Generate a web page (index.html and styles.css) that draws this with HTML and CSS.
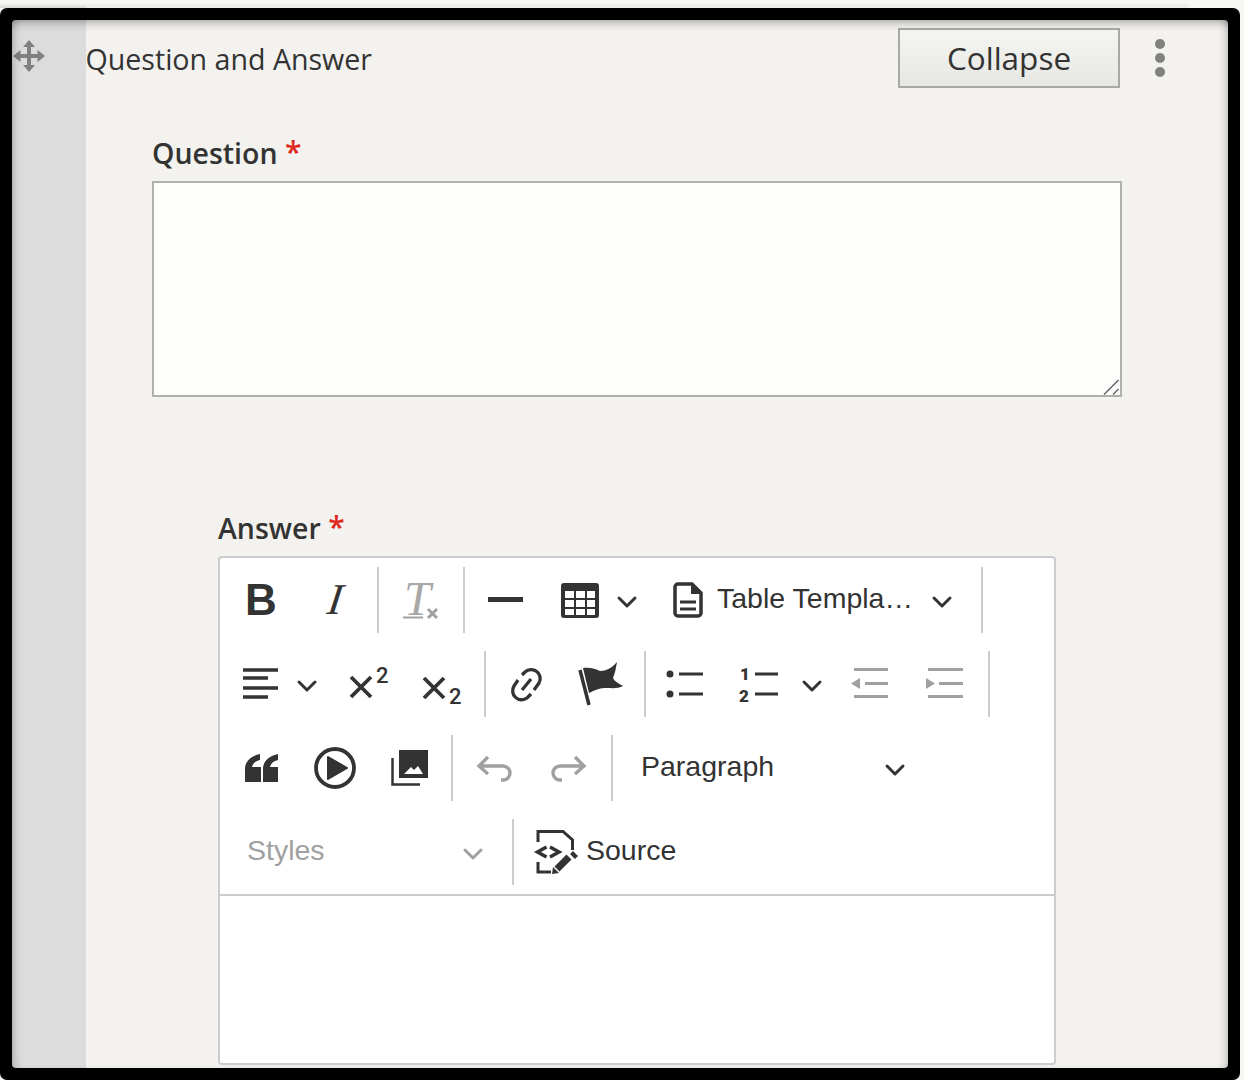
FILE: index.html
```html
<!DOCTYPE html>
<html lang="en">
<head>
<meta charset="utf-8">
<title>Question and Answer</title>
<link rel="stylesheet" href="styles.css">
</head>
<body>
<div class="strip"></div>
<div class="frame">
  <aside class="rail">
    <svg class="move" width="32" height="32" viewBox="0 0 32 32"><path d="M16 0l6 7h-4v7h6.500v-4L32 16l-7.500 6v-4H18v7h4l-6 7-6-7h4v-7H7.500v4L0 16l7.500-6v4H14V7h-4z"/></svg>
  </aside>
  <main class="main">
    <header class="head">
      <h2 class="title">Question and Answer</h2>
      <button class="collapse" type="button">Collapse</button>
      <div class="kebab"><span></span><span></span><span></span></div>
    </header>

    <section class="question">
      <label class="label">Question <span class="req">*</span></label>
      <div class="qwrap">
        <textarea class="qbox"></textarea>
        <svg class="grip" width="16" height="16" viewBox="0 0 16 16"><path d="M1 15.500L15.500 1M10 15.500L15.500 10"/></svg>
      </div>
    </section>

    <section class="answer">
      <label class="label">Answer <span class="req">*</span></label>
      <div class="editor">
        <div class="toolbar">
          <div class="row">
            <div class="tb"><span class="g-b">B</span></div>
            <div class="tb"><span class="g-i">I</span></div>
            <i class="sep"></i>
            <div class="tb">
              <svg class="ic off" width="40" height="40" viewBox="0 0 40 40"><text x="3" y="35" class="t-tx">T</text><path class="ln" d="M2 37.500h20" stroke-width="2"/><path class="ln" d="M27 29l9 9m0-9l-9 9" stroke-width="3"/></svg>
            </div>
            <i class="sep"></i>
            <div class="tb">
              <svg class="ic" width="40" height="40" viewBox="0 0 40 40"><path class="ln" d="M1 19.500h35" stroke-width="5"/></svg>
            </div>
            <div class="drop d107">
              <svg class="ic" width="40" height="40" viewBox="0 0 40 40"><path class="fill" fill-rule="evenodd" d="M3 3h32a3 3 0 0 1 3 3v29a3 3 0 0 1-3 3H3a3 3 0 0 1-3-3V6a3 3 0 0 1 3-3zM4 11v7h9v-7zM15 11v7h9v-7zM26 11v7h8v-7zM4 20v7h9v-7zM15 20v7h9v-7zM26 20v7h8v-7zM4 29v6h9v-6zM15 29v6h9v-6zM26 29v6h8v-6z"/></svg>
              <svg class="chev" width="20" height="12" viewBox="0 0 20 12"><path d="M2 2l8 8 8-8"/></svg>
            </div>
            <div class="drop tpl">
              <svg class="ic-doc" width="30" height="36" viewBox="0 0 30 36"><path class="ln" d="M5 2h14l9 9v20a3 3 0 0 1-3 3H5a3 3 0 0 1-3-3V5a3 3 0 0 1 3-3z" stroke-width="3.500"/><path class="fill" d="M18 1l11 11H18z"/><path class="ln" d="M7 20h16M7 27h16" stroke-width="3"/></svg>
              <span class="tx tpl-tx">Table Templa…</span>
              <svg class="chev end" width="20" height="12" viewBox="0 0 20 12"><path d="M2 2l8 8 8-8"/></svg>
            </div>
            <i class="sep"></i>
          </div>

          <div class="row">
            <div class="drop d107">
              <svg class="ic" width="40" height="40" viewBox="0 0 40 40"><path class="ln" d="M2 6h35M2 14h25M2 24h35M2 33h25" stroke-width="3.600"/></svg>
              <svg class="chev" width="20" height="12" viewBox="0 0 20 12"><path d="M2 2l8 8 8-8"/></svg>
            </div>
            <div class="tb">
              <svg class="ic" width="40" height="40" viewBox="0 0 40 40"><path class="ln" d="M3 13l20 20m0-20L3 33" stroke-width="3.800"/><text x="28" y="19" class="t-num">2</text></svg>
            </div>
            <div class="tb">
              <svg class="ic" width="40" height="40" viewBox="0 0 40 40"><path class="ln" d="M2 14l20 20m0-20L2 34" stroke-width="3.800"/><text x="27" y="40" class="t-num">2</text></svg>
            </div>
            <i class="sep"></i>
            <div class="tb">
              <svg class="ic" width="40" height="40" viewBox="0 0 40 40"><path class="ln" d="M14 11l3-3a9 9 0 0 1 14 11l-5 7M10 16l-4 6a9 9 0 0 0 13 12l4-4M14 26l9-11" stroke-width="3.300"/></svg>
            </div>
            <div class="tb">
              <svg class="ic" width="40" height="40" viewBox="0 0 40 40"><path class="ln" d="M-2 6l9 35" stroke-width="3.500"/><path class="fill" d="M1 4C8 3 14 5 18 7 24 7 30 4 35-2 34 4 33 9 31 14 33 18 38 20 41 22 36 25 30 24 24 24 19 24 15 25 7 29z"/></svg>
            </div>
            <i class="sep"></i>
            <div class="tb">
              <svg class="ic" width="40" height="40" viewBox="0 0 40 40"><circle class="fill" cx="2" cy="10" r="3.500"/><circle class="fill" cx="2" cy="30" r="3.500"/><path class="ln" d="M11 10h24M11 30h24" stroke-width="3"/></svg>
            </div>
            <div class="drop d110">
              <svg class="ic" width="40" height="40" viewBox="0 0 40 40"><text x="-2" y="16" class="t-ol">1</text><text x="-3" y="38" class="t-ol">2</text><path class="ln" d="M13 10h23M13 30h23" stroke-width="3"/></svg>
              <svg class="chev wide" width="20" height="12" viewBox="0 0 20 12"><path d="M2 2l8 8 8-8"/></svg>
            </div>
            <div class="tb">
              <svg class="ic off" width="40" height="40" viewBox="0 0 40 40"><path class="ln" d="M2 5.500h34M13 19.500h23M2 32.500h34" stroke-width="3"/><path class="fill" d="M-1 19.500L8 14v11z"/></svg>
            </div>
            <div class="tb">
              <svg class="ic off" width="40" height="40" viewBox="0 0 40 40"><path class="ln" d="M2 5.500h35M13 19.500h24M2 32.500h35" stroke-width="3"/><path class="fill" d="M9 19.500L0 14v11z"/></svg>
            </div>
            <i class="sep"></i>
          </div>

          <div class="row">
            <div class="tb">
              <svg class="ic" width="40" height="40" viewBox="0 0 40 40"><path class="fill" d="M4 34V21C4 13 10 8 19 6v6c-4 1-7 3-8 7h9v15zM22 34V21c0-8 6-13 15-15v6c-4 1-7 3-8 7h8v15z"/></svg>
            </div>
            <div class="tb">
              <svg class="ic" width="42" height="42" viewBox="0 0 42 42"><circle class="ln" cx="21" cy="21" r="19" stroke-width="3.800"/><path class="fill" stroke="#333" stroke-width="2" stroke-linejoin="round" d="M14 10l19 11-19 11z"/></svg>
            </div>
            <div class="tb">
              <svg class="ic" width="40" height="40" viewBox="0 0 40 40"><path class="fill" fill-rule="evenodd" d="M10 2h29v28H10zM15 26h19l-5-8-4 4-3-3z"/><path class="ln" d="M3.500 10v26.500H31" stroke-width="2.500"/></svg>
            </div>
            <i class="sep"></i>
            <div class="tb">
              <svg class="ic off" width="40" height="40" viewBox="0 0 40 40"><path class="ln" d="M13 9l-9 9 9 8M4 18h24a7 7 0 0 1 0 14h-2" stroke-width="3.400"/></svg>
            </div>
            <div class="tb">
              <svg class="ic off" width="40" height="40" viewBox="0 0 40 40"><path class="ln" d="M26 9l9 9-9 8M35 18H11a7 7 0 0 0 0 14h2" stroke-width="3.400"/></svg>
            </div>
            <i class="sep"></i>
            <div class="drop para">
              <span class="tx">Paragraph</span>
              <svg class="chev end" width="20" height="12" viewBox="0 0 20 12"><path d="M2 2l8 8 8-8"/></svg>
            </div>
          </div>

          <div class="row">
            <div class="drop styles off">
              <span class="tx">Styles</span>
              <svg class="chev end" width="20" height="12" viewBox="0 0 20 12"><path d="M2 2l8 8 8-8"/></svg>
            </div>
            <i class="sep"></i>
            <div class="source">
              <svg class="ic-src" width="44" height="44" viewBox="0 0 44 44"><path class="ln" d="M3 12V1.500h25L37.500 10v10M3 32v10h13" stroke-width="3"/><path class="ln" d="M11.500 17l-9 5 9 5M15 17l9 5-9 5" stroke-width="3.500"/><path class="ln" d="M22 39l12-12" stroke-width="7" stroke-linecap="butt"/><path class="fill" d="M17 44l1-7 6 6zM38 21l5 5-3 3-5-5z"/></svg>
              <span class="tx">Source</span>
            </div>
          </div>
        </div>
        <div class="content"></div>
      </div>
    </section>
  </main>
  <div class="shade"></div>
</div>
</body>
</html>
```

FILE: styles.css
```css
* { box-sizing: border-box; }
html, body { margin: 0; height: 1080px; overflow: hidden; }
body { background: #f6f6f3; color: #333; font-family: "Open Sans", sans-serif; }

.strip {
  height: 8px;
  background:
    linear-gradient(#dcdcdc, #dcdcdc) 0 6px / 86px 2px no-repeat,
    linear-gradient(#ecece8, #ecece8) 0 4px / 1188px 4px no-repeat;
}

.frame {
  position: relative;
  display: flex;
  width: 1240px;
  height: 1072px;
  border: 12px solid #000;
  border-radius: 7px;
  background: #f3f2ee;
  overflow: hidden;
}
.shade {
  position: absolute;
  inset: 0;
  border-radius: 4px;
  pointer-events: none;
  box-shadow: 0 0 0 4px #000, inset 0 9px 9px -6px rgba(0, 0, 0, .28), inset 8px 0 8px -6px rgba(0, 0, 0, .22), inset -8px 0 8px -6px rgba(0, 0, 0, .22);
}

.rail { flex: 0 0 74px; padding: 20px 0 0 1px; background: #dcdcdc; }
.move { display: block; fill: #808080; }

.main { flex: 1; min-width: 0; }
.head { display: flex; align-items: center; height: 68px; padding: 8px 63px 0 0; }
.title { margin: 2px 0 0 -.5px; font-size: 28.6px; font-weight: 400; line-height: 40px; }
.collapse {
  width: 222px;
  height: 60px;
  margin-left: auto;
  padding: 0 0 2px;
  border: 2px solid #a8a8a6;
  background: linear-gradient(#f5f5f1, #e6e6e2);
  color: #333;
  font: 500 31.5px "Open Sans", sans-serif;
}
.kebab { display: flex; flex-direction: column; gap: 4px; margin: 0 0 0 35px; }
.kebab span { width: 10px; height: 10px; border-radius: 50%; background: #808080; }

.label { display: block; height: 50px; font-size: 28.5px; font-weight: 600; line-height: 44px; white-space: nowrap; }
.req { color: #e0281f; font-size: 30px; line-height: 20px; vertical-align: 1px; }

.question { margin: 43px 0 0 66px; width: 970px; }
.qwrap { position: relative; }
.qbox {
  display: block;
  width: 970px;
  height: 216px;
  margin: 0;
  border: 2px solid #b0b0ae;
  background: #fdfdfb;
  outline: 0;
  resize: none;
}
.grip { position: absolute; right: 3px; bottom: 2px; }
.grip path { fill: none; stroke: #666; stroke-width: 1.5; }

.answer { margin: 109px 0 0 132px; width: 838px; }
.editor { height: 509px; border: 2px solid #cbcbd0; border-radius: 4px; background: #fff; }
.toolbar {
  display: flex;
  flex-direction: column;
  gap: 18px;
  padding: 9px 0;
  border-bottom: 2px solid #cbcbd0;
}
.row { display: flex; align-items: center; height: 66px; padding-left: 4px; }
.tb { display: flex; flex: 0 0 74px; align-items: center; justify-content: center; height: 66px; }
.sep { flex: 0 0 2px; height: 66px; margin: 0 5px; background: #cbcbd0; }

svg { overflow: visible; }
.ic, .ic-doc, .ic-src, .chev { display: block; flex: none; }
.ln { fill: none; stroke: #333; }
.fill { fill: #333; }
.off .ln, .ic.off .ln { stroke: #a0a0a0; }
.ic.off .fill { fill: #a0a0a0; }
.t-tx { fill: #a8a8a8; font: italic 400 48px "Liberation Serif", serif; }
.t-num { fill: #333; font: 500 22px "Roboto", sans-serif; }
.t-ol { fill: #333; font: 900 17px "Roboto", sans-serif; }

.g-b { color: #333; font: 700 44px/66px "Liberation Sans", sans-serif; }
.g-i { display: inline-block; color: #333; font: italic 400 44px/66px "Liberation Serif", serif; transform: skewX(-8deg); }

.drop { display: flex; flex: none; align-items: center; height: 66px; }
.d107 { width: 107px; padding-left: 17px; }
.d110 { width: 110px; padding-left: 17px; }
.chev { margin: 3px 0 0 16px; }
.chev.wide { margin-left: 20px; }
.chev.end { margin-left: auto; }
.chev path { fill: none; stroke: #333; stroke-width: 3; stroke-linecap: round; stroke-linejoin: round; }
.tx { margin-bottom: 4px; color: #333; font: 400 28.5px/40px "Liberation Sans", sans-serif; white-space: nowrap; }

.tpl { width: 325px; padding: 0 24px 0 22px; }
.tpl-tx { margin-left: 14px; }
.para { width: 307px; padding: 0 20px 0 23px; }
.styles { width: 283px; padding: 0 24px 0 23px; }
.styles .tx { color: #a0a0a0; }
.styles .chev path { stroke: #a0a0a0; }

.source { display: flex; align-items: center; height: 66px; padding-left: 16px; }
.ic-src { margin-right: 7px; }
.content { height: 168px; }
```
